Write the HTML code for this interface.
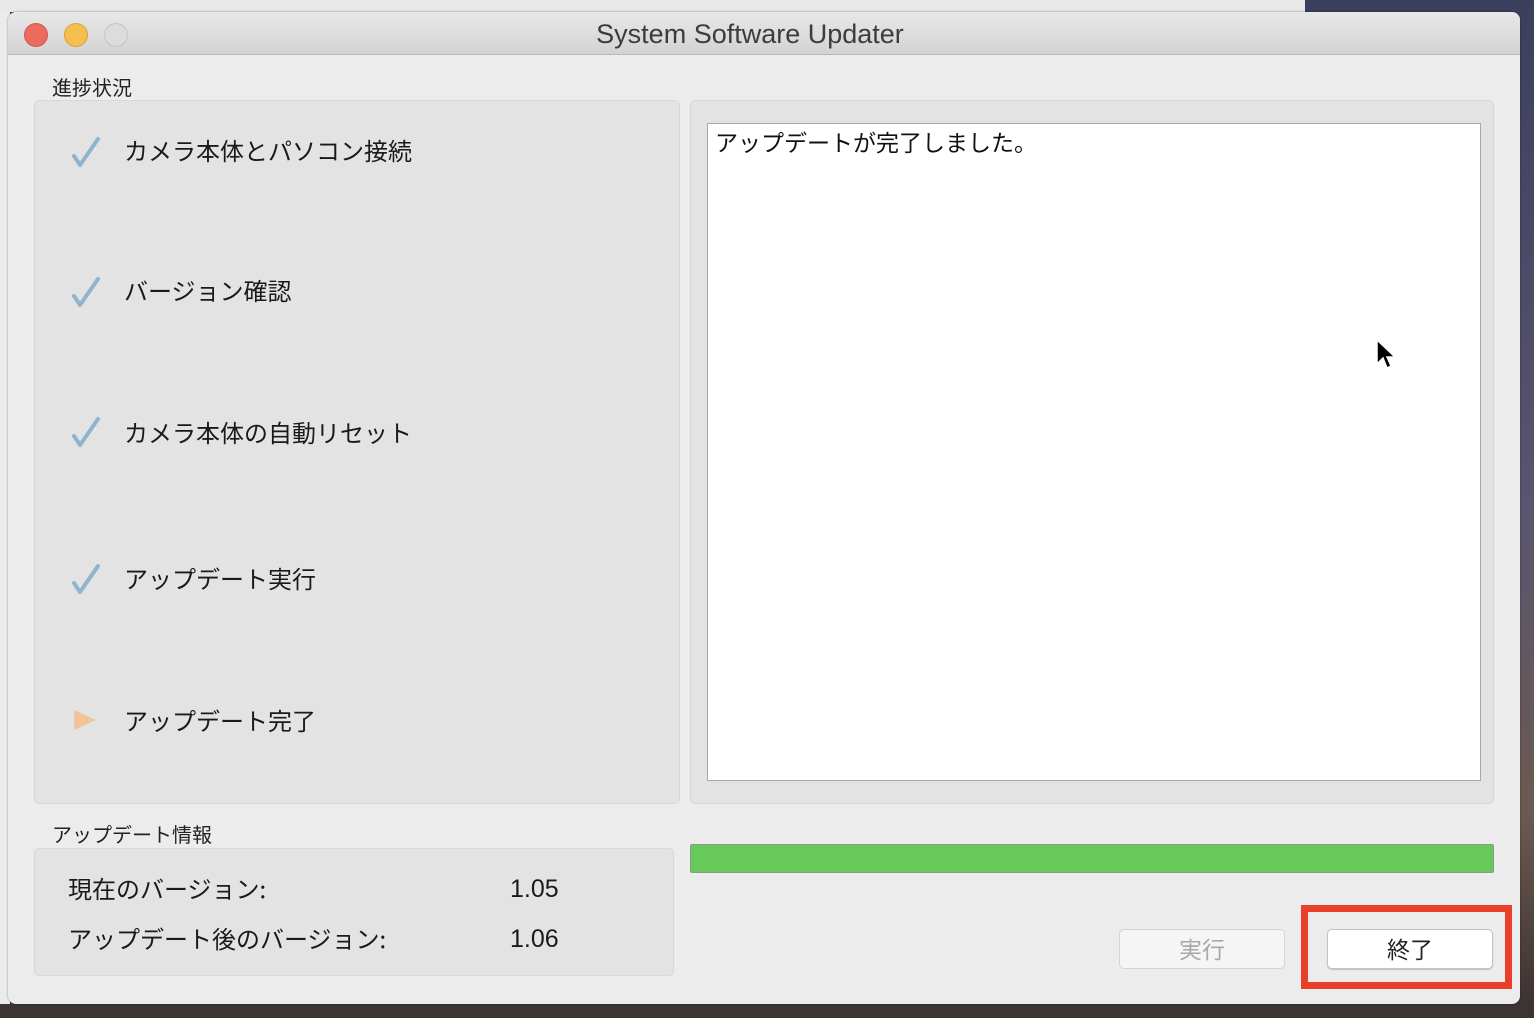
<!DOCTYPE html>
<html><head><meta charset="utf-8"><style>
*{margin:0;padding:0;box-sizing:border-box}
body{width:1534px;height:1018px;position:relative;overflow:hidden;background:linear-gradient(180deg,#3b3f5e 0%,#5a5570 50%,#6b5a50 80%,#3a3030 100%);font-family:"Liberation Sans","Noto Sans CJK JP",sans-serif;color:#1a1a1a}
.a{position:absolute}
.jp{font-family:"Noto Sans CJK JP","Liberation Sans",sans-serif}
</style></head><body>
<div class="a" style="left:0;top:0;width:1305px;height:12px;background:#e8e8e8"></div>
<div class="a" style="left:0;top:12px;width:10px;height:1006px;background:#ececec"></div>
<div class="a" style="left:0;top:1004px;width:1534px;height:14px;background:#3a3432"></div>
<div class="a" style="left:8px;top:12px;width:1512px;height:992px;background:#ececec;border-radius:8px;overflow:hidden;box-shadow:0 0 2px rgba(0,0,0,.4)">
 <div class="a" style="left:0;top:0;width:1512px;height:43px;background:linear-gradient(#e8e8e8,#d3d3d3);border-bottom:1px solid #b8b8b8"></div>
 <div class="a" style="left:16px;top:11px;width:24px;height:24px;border-radius:50%;background:#ed6a5e;border:1px solid #d4554a"></div>
 <div class="a" style="left:56px;top:11px;width:24px;height:24px;border-radius:50%;background:#f5bf4f;border:1px solid #d9a23a"></div>
 <div class="a" style="left:96px;top:11px;width:24px;height:24px;border-radius:50%;background:#dcdcdc;border:1px solid #c4c4c4"></div>
 <div class="a" style="left:-14px;top:7px;width:1512px;text-align:center;font-size:27px;color:#3c3c3c">System Software Updater</div>

 <div class="a jp" style="left:44px;top:60px;font-size:20px;color:#222">進捗状況</div>
 <div class="a" style="left:26px;top:88px;width:646px;height:704px;background:#e3e3e3;border:1px solid #d8d8d8;border-radius:5px"></div>
 <div class="a" style="left:682px;top:88px;width:804px;height:704px;background:#e3e3e3;border:1px solid #d8d8d8;border-radius:5px"></div>
 <div class="a" style="left:699px;top:111px;width:774px;height:658px;background:#fff;border:1px solid #a8a8a8"></div>
 <div class="a jp" style="left:707px;top:112px;font-size:23px;color:#111">アップデートが完了しました。</div>

 <svg class="a" style="left:62px;top:124px" width="32" height="34" viewBox="0 0 32 34"><path d="M4 20 L10 29 L28 3" fill="none" stroke="#8fb4cc" stroke-width="4" stroke-linecap="round" stroke-linejoin="round"/></svg>
 <svg class="a" style="left:62px;top:264px" width="32" height="34" viewBox="0 0 32 34"><path d="M4 20 L10 29 L28 3" fill="none" stroke="#8fb4cc" stroke-width="4" stroke-linecap="round" stroke-linejoin="round"/></svg>
 <svg class="a" style="left:62px;top:404px" width="32" height="34" viewBox="0 0 32 34"><path d="M4 20 L10 29 L28 3" fill="none" stroke="#8fb4cc" stroke-width="4" stroke-linecap="round" stroke-linejoin="round"/></svg>
 <svg class="a" style="left:62px;top:551px" width="32" height="34" viewBox="0 0 32 34"><path d="M4 20 L10 29 L28 3" fill="none" stroke="#8fb4cc" stroke-width="4" stroke-linecap="round" stroke-linejoin="round"/></svg>
 <svg class="a" style="left:64px;top:696px" width="26" height="24" viewBox="0 0 26 24"><path d="M2 2 L24 12 L2 22 Z" fill="#f0c498"/></svg>

 <div class="a jp" style="left:116px;top:120px;font-size:24px">カメラ本体とパソコン接続</div>
 <div class="a jp" style="left:116px;top:260px;font-size:24px">バージョン確認</div>
 <div class="a jp" style="left:116px;top:402px;font-size:24px">カメラ本体の自動リセット</div>
 <div class="a jp" style="left:116px;top:548px;font-size:24px">アップデート実行</div>
 <div class="a jp" style="left:116px;top:690px;font-size:24px">アップデート完了</div>

 <div class="a jp" style="left:44px;top:807px;font-size:20px;color:#222">アップデート情報</div>
 <div class="a" style="left:26px;top:836px;width:640px;height:128px;background:#e3e3e3;border:1px solid #d8d8d8;border-radius:5px"></div>
 <div class="a jp" style="left:60px;top:858px;font-size:24px">現在のバージョン:</div>
 <div class="a jp" style="left:60px;top:908px;font-size:24px">アップデート後のバージョン:</div>
 <div class="a" style="left:502px;top:863px;font-size:25px">1.05</div>
 <div class="a" style="left:502px;top:913px;font-size:25px">1.06</div>

 <div class="a" style="left:682px;top:832px;width:804px;height:29px;background:#66c95a;border:1px solid #8a9a88;border-radius:2px"></div>

 <div class="a jp" style="left:1111px;top:917px;width:166px;height:40px;background:#f5f5f5;border:1px solid #d4d4d4;border-radius:5px;text-align:center;line-height:36px;font-size:23px;color:#a8a8a8">実行</div>
 <div class="a" style="left:1293px;top:893px;width:211px;height:84px;border:7px solid #e9402a"></div>
 <div class="a jp" style="left:1319px;top:917px;width:166px;height:40px;background:#fff;border:1px solid #c4c4c4;border-radius:5px;box-shadow:0 1px 1px rgba(0,0,0,.2);text-align:center;line-height:36px;font-size:23px;color:#222">終了</div>

 <svg class="a" style="left:1366px;top:326px" width="24" height="36" viewBox="0 0 24 36"><path d="M3 2 L3 26 L9 20 L13 30 L17 28 L13 19 L21 19 Z" fill="#000" stroke="#fff" stroke-width="1.5"/></svg>
</div>
</body></html>
